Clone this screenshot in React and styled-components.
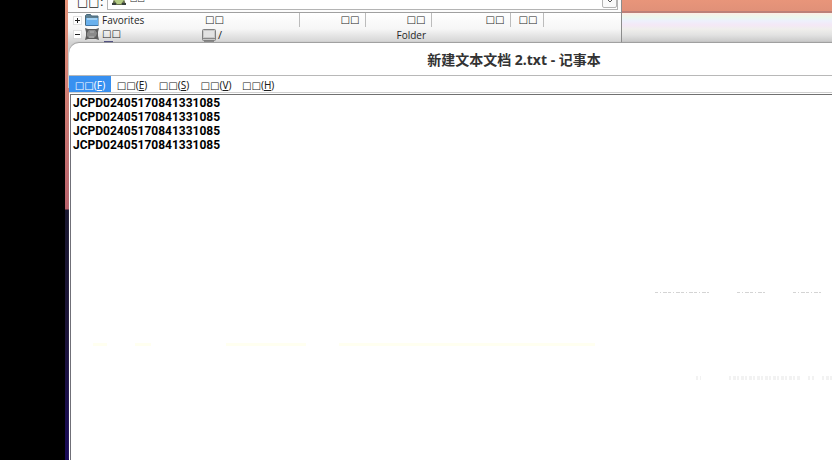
import { useState } from "react";
import styled, { createGlobalStyle } from "styled-components";

const GlobalStyle = createGlobalStyle`
    * {
        box-sizing: border-box;
    }
    body {
        margin: 0;
        background: #000000;
        overflow: hidden;
        font-family: "Noto Sans", "DejaVu Sans", "Noto Sans CJK SC", sans-serif;
    }
`;
const Screen = styled.div`
    display: flex;
    height: 100vh;
    padding-left: 65px;
    background: #000000;
`;
const Desktop = styled.main`
    position: relative;
    flex: 1;
    overflow: hidden;
    background: linear-gradient(#e8957a 0, #e09078 12px, #b8626c 209px, #1a1830 210px, #1c1438 330px, #190a58 100%);
`;
const ExplorerWindow = styled.section`
    position: absolute;
    top: -12px;
    left: 3px;
    width: 554px;
    height: 100px;
    display: flex;
    flex-direction: column;
    background: #fcfcfc;
    border-right: 1px solid #8c8c8c;
    color: #262626;
    font-family: "Open Sans", "Noto Sans", sans-serif;
    font-size: 10px;
    line-height: 14px;
`;
const AddressBar = styled.form`
    display: flex;
    align-items: flex-end;
    gap: 4px;
    height: 25px;
    padding: 0 3px 2px 9px;
    border-bottom: 1px solid #a0a0a0;
`;
const AddressLabel = styled.label`
    width: 26px;
    padding-bottom: 1px;
    font-family: "DejaVu Sans", sans-serif;
    font-size: 12px;
    line-height: 14px;
    white-space: nowrap;
`;
const AddressBox = styled.div`
    display: flex;
    align-items: flex-end;
    flex: 1;
    height: 22px;
    padding: 0 0 1px 4px;
    border: 1px solid #b4b4b4;
    border-top: none;
    background: #ffffff;
    & > svg {
        margin-bottom: 2px;
    }
    & input {
        flex: 1;
        min-width: 0;
        height: 18px;
        padding: 0 4px 2px;
        border: none;
        outline: none;
        background: transparent;
        color: #262626;
        font-family: "DejaVu Sans", sans-serif;
        font-size: 8px;
    }
`;
const DropButton = styled.button`
    display: flex;
    align-items: flex-end;
    justify-content: center;
    width: 15px;
    height: 20px;
    padding: 0 0 4px;
    border: 1px solid #b4b4b4;
    border-radius: 2px;
    background: #fafafa;
`;
const Panes = styled.div`
    display: flex;
    flex: 1;
    background: linear-gradient(#ffffff 0, #f6f6f6 16px, #d2d2d2 30px);
`;
const Tree = styled.ul`
    width: 132px;
    margin: 0;
    padding: 0 0 0 5px;
    list-style: none;
`;
const TreeItem = styled.li`
    display: flex;
    align-items: center;
    gap: 3px;
    height: 14px;
    padding-left: ${(props) => (props.$nested ? "28px" : "0")};
`;
const Boxes = styled.span`
    font-family: "DejaVu Sans", sans-serif;
`;
const FileTable = styled.table`
    flex: 1;
    align-self: flex-start;
    border-collapse: collapse;
    table-layout: fixed;
    width: 0;
    & th, & td {
        height: 14px;
        padding: 0 5px;
        font-weight: normal;
        text-align: right;
        line-height: 14px;
        white-space: nowrap;
    }
    & th {
        border-right: 1px solid #bcbcbc;
        font-family: "DejaVu Sans", sans-serif;
    }
    & th:first-child {
        text-align: left;
    }
    & td:first-child {
        padding: 0 2px;
    }
    & th:last-child {
        border: none;
    }
`;
const NameCell = styled.span`
    display: flex;
    align-items: center;
    gap: 2px;
    height: 16px;
    font-size: 11px;
`;
const BackWindow = styled.section`
    position: absolute;
    top: 11px;
    left: 557px;
    right: 0;
    height: 60px;
    border-top: 2px solid #bd8078;
    background: linear-gradient(#fdeee6 0, #ecf8ee 4px, #eef0fc 8px, #f4e8f6 12px, #f0efec 16px, #e2e2e2 22px, #c4c4c4 30px);
`;
const NotepadWindow = styled.section`
    position: absolute;
    top: 43px;
    left: 4px;
    right: -127px;
    bottom: 0;
    display: flex;
    flex-direction: column;
    border-radius: 10px 10px 0 0;
    background: #ffffff;
    box-shadow: 0 -1px 1px #9c9c9c;
    overflow: hidden;
`;
const TitleBar = styled.header`
    display: flex;
    align-items: center;
    justify-content: center;
    height: 33px;
    padding-top: 2px;
    border-bottom: 1px solid #b8b8b8;
`;
const Title = styled.h1`
    margin: 0;
    color: #333333;
    font-family: "Noto Sans", "Noto Sans CJK SC", sans-serif;
    font-size: 14px;
    font-weight: bold;
    line-height: 20px;
`;
const MenuBar = styled.nav`
    display: flex;
    height: 17px;
    border-bottom: 1px solid #d0d0d0;
`;
const MenuButton = styled.button`
    min-width: 42px;
    padding: 2px 5px 0;
    border: none;
    background: ${(props) => (props.$active ? "#3890f0" : "transparent")};
    color: ${(props) => (props.$active ? "#ffffff" : "#202020")};
    font-family: "Noto Sans", "DejaVu Sans", sans-serif;
    font-size: 10px;
    line-height: 14px;
    text-align: center;
    white-space: nowrap;
`;
const Editor = styled.div`
    position: relative;
    display: flex;
    flex: 1;
    margin: 1px 0 0 1px;
    border-top: 1px solid #707070;
    border-left: 1px solid #707078;
    & textarea {
        flex: 1;
        padding: 1px 2px;
        border: none;
        outline: none;
        resize: none;
        background: #ffffff;
        color: #000000;
        font-family: Roboto, "Liberation Sans", sans-serif;
        font-size: 12px;
        font-weight: bold;
        line-height: 14px;
    }
`;
const Specks = styled.svg`
    position: absolute;
    top: 0;
    left: 0;
    pointer-events: none;
`;

const menus = ["F", "E", "S", "V", "H"];

const content = Array(4).fill("JCPD02405170841331085").join("\n");

const Expander = ({ open }) => (
    <svg width="9" height="9" viewBox="0 0 9 9">
        <rect x="0.5" y="0.5" width="8" height="8" fill="#ffffff" stroke="#c4c4c4" strokeDasharray="1 1" />
        <path d={open ? "M2 4.5h5" : "M2 4.5h5M4.5 2v5"} stroke="#222222" />
    </svg>
);

const FolderIcon = () => (
    <svg width="14" height="12" viewBox="0 0 14 12">
        <path d="M0.5 11V1.5L1.5 0.5H5.5L6.5 2H13V11Z" fill="#5d7f92" stroke="#49687a" />
        <rect x="1" y="4" width="12" height="7" fill="#69b0ec" />
        <rect x="2" y="4" width="10" height="2" fill="#a2d2f6" />
        <path d="M0.5 11.5h13" stroke="#3e76aa" />
    </svg>
);

const DesktopIcon = () => (
    <svg width="14" height="12" viewBox="0 0 14 12">
        <path d="M0 0L3 1H11L14 0L13 4V8L14 12L11 11H3L0 12L1 8V4Z" fill="#5c5c5c" />
        <path d="M4 2H10L12 5L11 8L9 10H4L2 8V5Z" fill="#8a8a8a" />
        <path d="M5 4h4M4 9h5" stroke="#b4b4b4" />
    </svg>
);

const AddressIcon = () => (
    <svg width="14" height="14" viewBox="0 0 14 14">
        <path d="M3 0H11L12 7L14 13H0L2 7Z" fill="#66704c" />
        <path d="M4 0H10L12 8L9 12H5L2 8Z" fill="#b4cc84" />
        <path d="M0 12h4M10 12h4" stroke="#38403c" strokeWidth="2" />
    </svg>
);

const DriveIcon = () => (
    <svg width="14" height="13" viewBox="0 0 14 13">
        <rect x="0.5" y="0.5" width="13" height="11" rx="1" fill="#c8c8c8" stroke="#808080" />
        <rect x="2" y="2" width="10" height="6" fill="#e2e2e2" />
        <path d="M1 9.5h12M2 12.5h10" stroke="#888888" />
    </svg>
);

const Explorer = () => (
    <ExplorerWindow>
        <AddressBar>
            <AddressLabel htmlFor="address">□□:</AddressLabel>
            <AddressBox>
                <AddressIcon />
                <input id="address" defaultValue="□□" />
                <DropButton type="button" aria-label="□□">
                    <svg width="8" height="5" viewBox="0 0 8 5">
                        <path d="M1 1L4 4L7 1" fill="none" stroke="#555555" />
                    </svg>
                </DropButton>
            </AddressBox>
        </AddressBar>
        <Panes>
            <Tree>
                <TreeItem><Expander /><FolderIcon />Favorites</TreeItem>
                <TreeItem><Expander open /><DesktopIcon /><Boxes>□□</Boxes></TreeItem>
                <TreeItem $nested>
                    <svg width="12" height="14" viewBox="0 0 12 14">
                        <rect x="3" width="9" height="9" fill="#4c4c80" />
                    </svg>
                </TreeItem>
            </Tree>
            <FileTable>
                <colgroup>
                    <col width="99" />
                    <col width="66" />
                    <col width="66" />
                    <col width="79" />
                    <col width="33" />
                    <col />
                </colgroup>
                <thead>
                    <tr>
                        <th>□□</th>
                        <th>□□</th>
                        <th>□□</th>
                        <th>□□</th>
                        <th>□□</th>
                        <th></th>
                    </tr>
                </thead>
                <tbody>
                    <tr>
                        <td><NameCell><DriveIcon />/</NameCell></td>
                        <td></td>
                        <td>Folder</td>
                        <td></td>
                        <td></td>
                        <td></td>
                    </tr>
                </tbody>
            </FileTable>
        </Panes>
    </ExplorerWindow>
);

const Notepad = () => {

    const [text, setText] = useState(content);
    const [active, setActive] = useState("F");

    return (
        <NotepadWindow>
            <TitleBar>
                <Title>新建文本文档 2.txt - 记事本</Title>
            </TitleBar>
            <MenuBar>
                {menus.map((key) => (
                    <MenuButton key={key} $active={key === active} onClick={() => setActive(key)}>
                        □□(<u>{key}</u>)
                    </MenuButton>
                ))}
            </MenuBar>
            <Editor>
                <textarea aria-label="新建文本文档 2.txt" spellCheck={false} value={text} onChange={(e) => setText(e.target.value)} />
                <Specks width="780" height="360" viewBox="0 0 780 360" fill="none">
                    <path d="M584 197.5h54M666 197.5h28M722 197.5h28" stroke="#d4d4d4" strokeDasharray="3 2 1 2 4 1" />
                    <path d="M625 283h5M658 283h72M737 283h6M751 283h12" stroke="#f2f2f2" strokeWidth="4" strokeDasharray="2 2 3 1" />
                    <path d="M22 249.5h14M64 249.5h16M155 249.5h80M268 249.5h256" stroke="#fffff0" strokeWidth="3" />
                </Specks>
            </Editor>
        </NotepadWindow>
    );
};

const App = () => (
    <>
        <GlobalStyle />
        <Screen>
            <Desktop>
                <BackWindow />
                <Explorer />
                <Notepad />
            </Desktop>
        </Screen>
    </>
);

export default App;
